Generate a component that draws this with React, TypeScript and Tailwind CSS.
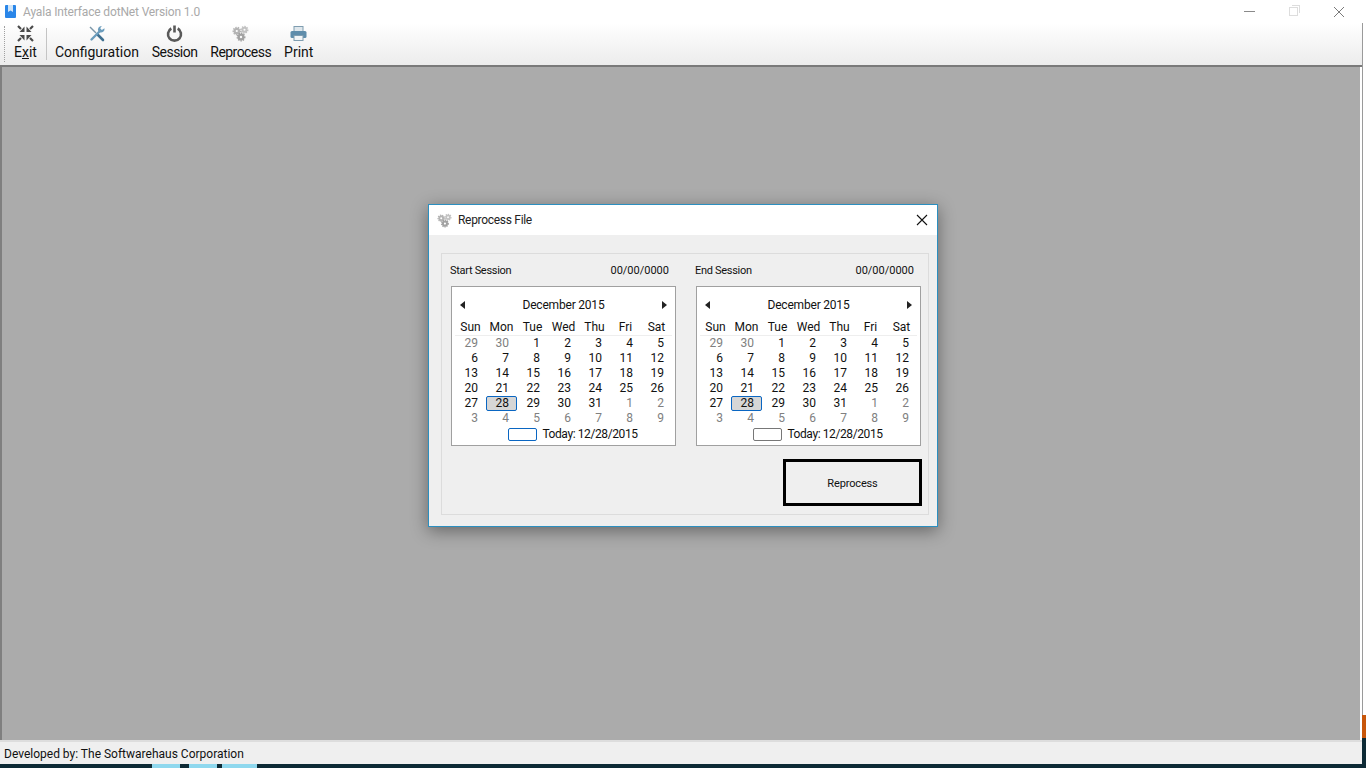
import React from 'react';

const font = { fontFamily: 'Roboto, "Noto Sans", sans-serif' };

// december 2015 grid, first and last rows spill into the other months
const weeks: [string, boolean][][] = [
  [['29', true], ['30', true], ['1', false], ['2', false], ['3', false], ['4', false], ['5', false]],
  [['6', false], ['7', false], ['8', false], ['9', false], ['10', false], ['11', false], ['12', false]],
  [['13', false], ['14', false], ['15', false], ['16', false], ['17', false], ['18', false], ['19', false]],
  [['20', false], ['21', false], ['22', false], ['23', false], ['24', false], ['25', false], ['26', false]],
  [['27', false], ['28', false], ['29', false], ['30', false], ['31', false], ['1', true], ['2', true]],
  [['3', true], ['4', true], ['5', true], ['6', true], ['7', true], ['8', true], ['9', true]],
];
const dayNames = ['Sun', 'Mon', 'Tue', 'Wed', 'Thu', 'Fri', 'Sat'];

function Gear({ cx, cy, r, fill }: { cx: number; cy: number; r: number; fill: string }) {
  return (
    <g>
      <circle cx={cx} cy={cy} r={r} fill="none" stroke={fill} strokeWidth="1.400" strokeDasharray="1.400 1.100" />
      <circle cx={cx} cy={cy} r={r * 0.62} fill="none" stroke={fill} strokeWidth={r * 0.62} />
    </g>
  );
}

function Gears({ size = 17 }: { size?: number }) {
  return (
    <svg width={size} height={size} viewBox="0 0 17 17">
      <Gear cx={4.800} cy={6} r={3.600} fill="#b4b4b4" />
      <Gear cx={12.500} cy={4.800} r={3.300} fill="#c2c2c2" />
      <Gear cx={9} cy={12} r={3.800} fill="#a2a2a2" />
    </svg>
  );
}

function ExitIcon() {
  return (
    <svg width="17" height="17" viewBox="0 0 17 17" fill="#4a4a4a" stroke="#4a4a4a">
      <g strokeWidth="0">
        <path d="M7.500 7V1.500L2.500 7z" />
        <path d="M9.500 7V1.500L14.500 7z" />
        <path d="M7.500 10v5.500L2.500 10z" />
        <path d="M9.500 10v5.500L14.500 10z" />
      </g>
      <path strokeWidth="2.200" d="M1 1l3 3M16 1l-3 3M1 16l3-3M16 16l-3-3" />
    </svg>
  );
}

function ToolsIcon() {
  return (
    <svg width="18" height="18" viewBox="0 0 18 18" fill="none">
      <path d="M2 2l6 6" stroke="#7b96a8" strokeWidth="1.400" />
      <path d="M9.500 9.500l5.500 5.500" stroke="#3f6f8f" strokeWidth="2.600" strokeLinecap="round" />
      <path d="M3.500 14.500L11 7" stroke="#6a9cbc" strokeWidth="2.400" strokeLinecap="round" />
      <path d="M16.500 3.200a3.600 3.600 0 0 1-5 4L10.200 6a3.600 3.600 0 0 1 3.600-5l-1.600 2.200 1.600 1.800z" fill="#6a9cbc" />
    </svg>
  );
}

function PowerIcon() {
  return (
    <svg width="17" height="17" viewBox="0 0 17 17" fill="none" stroke="#595959" strokeWidth="2.600">
      <path d="M5.300 3.500a6.500 6.500 0 1 0 6.400 0" />
      <path d="M8.500 0.500v7" />
    </svg>
  );
}

function PrintIcon() {
  return (
    <svg width="17" height="15" viewBox="0 0 17 15">
      <rect x="4" y="0.500" width="9" height="5" fill="#dfe7ec" stroke="#7f9db0" />
      <rect x="0.500" y="5" width="16" height="7" rx="1.500" fill="#5f8dab" />
      <rect x="4" y="9.500" width="9" height="5" fill="#f2f5f7" stroke="#7f9db0" />
    </svg>
  );
}

function ToolItem({ icon, label, tracking = '' }: { icon: React.ReactNode; label: React.ReactNode; tracking?: string }) {
  return (
    <div className="flex h-full flex-col items-center">
      <div className="flex h-[20px] items-center justify-center pt-[1px]">{icon}</div>
      <div className={`text-[14px] leading-[19px] text-[#111] ${tracking}`}>{label}</div>
    </div>
  );
}

function Calendar({ focusBorder }: { focusBorder: string }) {
  return (
    <div className="h-[160px] w-[225px] border border-[#a0a0a0] bg-white px-[3px] pt-[10px]">
      <div className="flex h-[16px] items-center justify-between px-[5px]">
        <span className="h-0 w-0 border-y-[4px] border-r-[5px] border-y-transparent border-r-[#222]" />
        <span className="text-[12px] leading-[16px] tracking-[-0.2px] text-[#111]">December 2015</span>
        <span className="h-0 w-0 border-y-[4px] border-l-[5px] border-y-transparent border-l-[#222]" />
      </div>
      <div className="mt-[6px] grid h-[17px] grid-cols-7 border-b border-[#eeeeee] pt-[1px] text-center text-[12px] leading-[15px] text-[#111]">
        {dayNames.map((d) => (
          <span key={d}>{d}</span>
        ))}
      </div>
      {weeks.map((week, i) => (
        <div key={i} className="grid h-[15px] grid-cols-7 text-[12px] leading-[15px]">
          {week.map(([d, muted], j) => {
            const selected = i === 4 && j === 1;
            return (
              <div key={j} className="relative pr-[8px] text-right">
                {selected && (
                  <span className="absolute left-0 top-0 h-[15px] w-[31px] rounded-[2px] border border-[#0a66c2] bg-[#d6d6d6]" />
                )}
                <span className={`relative ${muted ? 'text-[#808080]' : 'text-[#111]'}`}>{d}</span>
              </div>
            );
          })}
        </div>
      ))}
      <div className="mt-[1px] flex h-[15px] items-center justify-center gap-[5px] pl-[19px] text-[12px] leading-[15px] text-[#111]">
        <span className={`h-[13px] w-[29px] rounded-[2px] border bg-white ${focusBorder}`} />
        <span className="tracking-[-0.4px]">Today: 12/28/2015</span>
      </div>
    </div>
  );
}

function SessionColumn({ label, focusBorder }: { label: string; focusBorder: string }) {
  return (
    <div className="w-[225px]">
      <div className="-ml-[1px] flex h-[32px] items-center justify-between pt-[2px] text-[11px] text-[#111]">
        <span className="tracking-[-0.3px]">{label}</span>
        <span className="mr-[7px]">00/00/0000</span>
      </div>
      <Calendar focusBorder={focusBorder} />
    </div>
  );
}

export default function App() {
  return (
    <div className="flex h-[768px] w-[1366px] flex-col overflow-hidden bg-white" style={font}>
      {/* window title */}
      <div className="flex h-[23px] shrink-0 items-center bg-white pl-[5px]">
        <svg width="11" height="13" viewBox="0 0 11 13">
          <rect width="11" height="13" rx="1" fill="#2a86e8" />
          <path d="M3 0h5v7L5.500 5.500 3 7z" fill="#cfe4f8" />
        </svg>
        <span className="ml-[7px] text-[12px] tracking-[-0.15px] text-[#a9a9a9]">Ayala Interface dotNet Version 1.0</span>
        <div className="ml-auto flex items-center pr-[22px]">
          <span className="mr-[34px] h-[1px] w-[11px] bg-[#8a8a8a]" />
          <span className="relative mr-[36px] h-[9px] w-[9px] border border-[#dddddd]">
            <span className="absolute -right-[3px] -top-[3px] h-[8px] w-[8px] border-r border-t border-[#dddddd]" />
          </span>
          <svg width="10" height="10" viewBox="0 0 10 10" stroke="#7a7a7a" strokeWidth="1">
            <path d="M0 0l10 10M10 0L0 10" />
          </svg>
        </div>
      </div>

      <div className="flex min-h-0 flex-1">
        <div className="flex min-w-0 flex-1 flex-col">
          {/* toolbar */}
          <div className="flex h-[44px] shrink-0 items-center border-b-2 border-[#7a7a7a] bg-gradient-to-b from-white to-[#ececec]">
            <div className="ml-[4px] mr-[9px] h-[36px] w-[1px] border-l border-dotted border-[#a0a0a0]" />
            <ToolItem
              icon={<ExitIcon />}
              label={
                <>
                  E<span className="underline">x</span>it
                </>
              }
            />
            <div className="ml-[9px] mr-[8px] h-[32px] w-[1px] bg-[#c4c4c4]" />
            <div className="flex h-full gap-[13px]">
              <ToolItem icon={<ToolsIcon />} label="Configuration" />
              <ToolItem icon={<PowerIcon />} label="Session" tracking="tracking-[-0.55px]" />
              <ToolItem icon={<Gears />} label="Reprocess" tracking="tracking-[-0.55px]" />
              <ToolItem icon={<PrintIcon />} label="Print" />
            </div>
          </div>

          {/* mdi client area */}
          <div className="flex min-h-0 flex-1 items-start border-l-2 border-r-2 border-l-[#7f7f7f] border-r-white bg-[#ababab] pl-[426px] pt-[137px]">
            <div className="h-[323px] w-[510px] border border-[#2b8fc0] bg-[#efefef] shadow-[0_4px_16px_rgba(0,0,0,0.4)]">
              <div className="flex h-[30px] items-center bg-white pl-[8px] pr-[9px]">
                <Gears size={15} />
                <span className="ml-[6px] text-[12px] tracking-[-0.3px] text-[#222]">Reprocess File</span>
                <svg className="ml-auto" width="12" height="12" viewBox="0 0 12 12" stroke="#111" strokeWidth="1.100">
                  <path d="M1 1l10 10M11 1L1 11" />
                </svg>
              </div>
              <div className="ml-[12px] mr-[8px] mt-[18px] h-[262px] border border-[#dcdcdc] pl-[9px] pr-[6px]">
                <div className="flex gap-[20px]">
                  <SessionColumn label="Start Session" focusBorder="border-[#0a66c2]" />
                  <SessionColumn label="End Session" focusBorder="border-[#777777]" />
                </div>
                <div className="mt-[13px] flex justify-end">
                  <div className="flex h-[47px] w-[139px] items-center justify-center border-[3px] border-black pt-[3px] text-[11px] tracking-[-0.15px] text-[#111]">
                    Reprocess
                  </div>
                </div>
              </div>
            </div>
          </div>

          {/* status bar */}
          <div className="flex h-[24px] shrink-0 items-center border-t-2 border-[#dddddd] bg-[#efefef] pl-[4px] pt-[1px] text-[12px] text-[#111]">
            Developed by: The Softwarehaus Corporation
          </div>

          {/* taskbar sliver */}
          <div className="flex h-[4px] shrink-0 bg-[#0d2a35]">
            <span className="ml-[152px] h-full w-[28px] bg-[#8fd8ee]" />
            <span className="ml-[9px] h-full w-[28px] bg-[#8fd8ee]" />
            <span className="ml-[5px] h-full w-[35px] bg-[#8fd8ee]" />
          </div>
        </div>

        {/* what shows of the window behind */}
        <div className="flex w-[4px] shrink-0 flex-col">
          <div className="flex-1 border-l border-[#9a9a9a] bg-white" />
          <div className="h-[23px] bg-[#c8560a]" />
          <div className="h-[30px] bg-[#0d2a35]" />
        </div>
      </div>
    </div>
  );
}
